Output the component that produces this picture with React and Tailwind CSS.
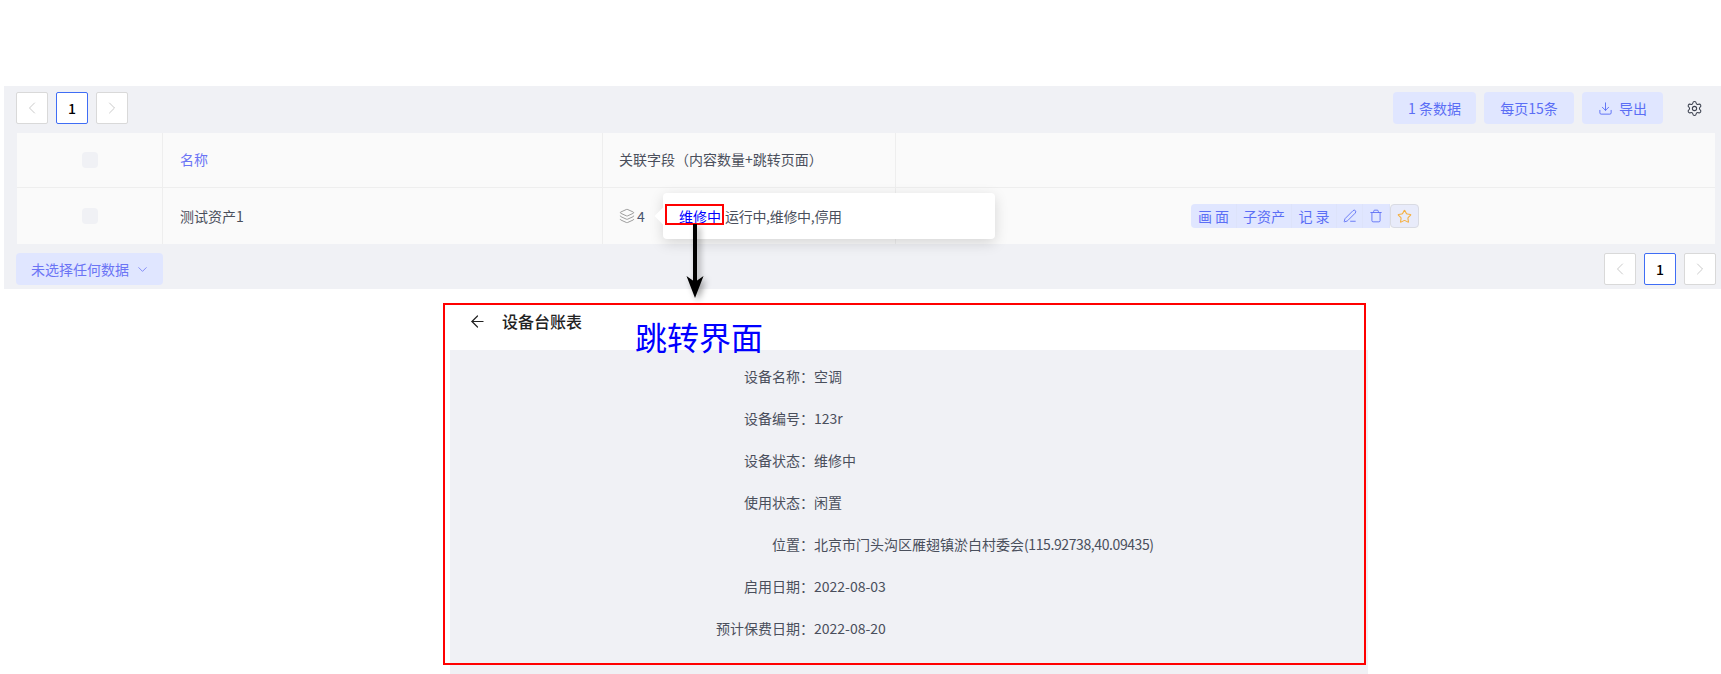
import { ArrowLeft, ChevronDown, ChevronLeft, ChevronRight, Download, Layers, PenLine, Settings, Star, Trash } from 'lucide-react';

const FIELDS = [
  ['设备名称：', '空调'],
  ['设备编号：', '123r'],
  ['设备状态：', '维修中'],
  ['使用状态：', '闲置'],
  ['位置：', <>北京市门头沟区雁翅镇淤白村委会<span className="tracking-[-0.4px]">(115.92738,40.09435)</span></>],
  ['启用日期：', '2022-08-03'],
  ['预计保费日期：', '2022-08-20'],
];

function Pager() {
  return (
    <div className="flex gap-2">
      <button className="w-8 h-8 flex items-center justify-center bg-white border border-[#d9d9d9] rounded-[2px] text-[#bfbfbf]">
        <ChevronLeft size={20} strokeWidth={1} />
      </button>
      <button className="w-8 h-8 flex items-center justify-center bg-white border border-[#3f6df5] rounded-[2px] text-[14px] font-medium text-black">
        1
      </button>
      <button className="w-8 h-8 flex items-center justify-center bg-white border border-[#d9d9d9] rounded-[2px] text-[#bfbfbf]">
        <ChevronRight size={20} strokeWidth={1} />
      </button>
    </div>
  );
}

function Checkbox() {
  return <div className="w-4 h-4 rounded-sm bg-[#f0f1f5]" />;
}

function ActionBtn({ children, className = '' }) {
  return <div className={`h-6 flex items-center justify-center bg-[#e0e6ff] border-r border-[#dde3fa] text-[#5b6ef5] text-[14px] ${className}`}>{children}</div>;
}

export default function App() {
  return (
    <div className="relative w-[1721px] h-[674px] overflow-hidden bg-white font-['Noto_Sans_CJK_SC','Liberation_Sans',sans-serif] text-[14px] text-[#4a4f5c]">
      <div className="h-[86px]" />

      <div className="ml-1 h-[203px] bg-[#f0f1f5] flex flex-col">
        <div className="h-[47px] pt-1.5 pl-3 pr-[13px] flex justify-between items-start">
          <Pager />
          <div className="flex items-center gap-2 text-[#5b6ef5]">
            <div className="w-[83px] h-8 flex items-center justify-center bg-[#e0e6ff] rounded-sm">1 条数据</div>
            <div className="w-[90px] h-8 flex items-center justify-center bg-[#e0e6ff] rounded-sm">每页15条</div>
            <div className="w-[81px] h-8 flex items-center justify-center gap-[6px] bg-[#e0e6ff] rounded-sm">
              <Download size={15} strokeWidth={1.5} />
              导出
            </div>
            <div className="w-[37px] flex justify-end pr-[5px] text-[#3d4250]">
              <Settings size={17} strokeWidth={1.5} />
            </div>
          </div>
        </div>

        <div className="ml-[13px] mr-[6px] bg-[#fafafa]">
          <div className="h-[55px] flex border-b border-[#eeeeee]">
            <div className="w-[146px] flex items-center justify-center border-r border-[#eeeeee]"><Checkbox /></div>
            <div className="w-[440px] flex items-center pl-[17px] pb-[2px] border-r border-[#eeeeee] text-[#6b74f5]">名称</div>
            <div className="w-[293px] flex items-center pl-4 pb-[2px] border-r border-[#eeeeee] text-[#4a4f5c]">关联字段（内容数量+跳转页面）</div>
          </div>
          <div className="h-[56px] flex">
            <div className="w-[146px] flex items-center justify-center border-r border-[#eeeeee]"><Checkbox /></div>
            <div className="w-[440px] flex items-center pl-[17px] border-r border-[#eeeeee]">测试资产1</div>
            <div className="w-[293px] flex items-center pl-4 border-r border-[#eeeeee]">
              <Layers size={16} strokeWidth={1.25} className="text-[#8a8a8a] mr-[2px]" />
              <span className="text-[#4a5570]">4</span>
            </div>
            <div className="flex-1 flex items-center pl-[295px]">
              <ActionBtn className="w-[46px] rounded-l-sm">画 面</ActionBtn>
              <ActionBtn className="w-[55px]">子资产</ActionBtn>
              <ActionBtn className="w-[45px]">记 录</ActionBtn>
              <ActionBtn className="w-[26px]"><PenLine size={14} strokeWidth={1.5} /></ActionBtn>
              <ActionBtn className="w-[27px]"><Trash size={14} strokeWidth={1.5} /></ActionBtn>
              <div className="w-[29px] h-6 flex items-center justify-center bg-[#e8ebfa] border border-[#d9dbe3] rounded-sm text-[#f5b041]">
                <Star size={15} strokeWidth={1.75} />
              </div>
            </div>
          </div>
        </div>

        <div className="flex-1 pl-3 pr-[5px] pt-[9px] flex justify-between items-start">
          <div className="w-[147px] h-8 flex items-center pl-[15px] gap-[6px] bg-[#e0e6ff] rounded-sm text-[#6b74f5]">
            未选择任何数据
            <ChevronDown size={15} strokeWidth={1.25} />
          </div>
          <Pager />
        </div>
      </div>

      <div className="mt-[61px] ml-[450px] w-[918px] h-[324px] bg-[#f0f1f5] pt-[15px] flex flex-col gap-[20px]">
        {FIELDS.map(([label, value]) => (
          <div key={label} className="flex h-[22px] items-center leading-[22px]">
            <div className="w-[364px] text-right">{label}</div>
            <div>{value}</div>
          </div>
        ))}
      </div>

      <div className="absolute left-[443px] top-[303px] w-[923px] h-[362px] border-2 border-[#ff0000]" />
      <div className="absolute left-[468px] top-[309px] flex items-center text-[#222222]">
        <ArrowLeft size={19} strokeWidth={1.5} />
        <span className="ml-[15px] text-[16px] font-medium">设备台账表</span>
      </div>
      <div className="absolute left-[635px] top-[314px] text-[32px] leading-[44px] text-[#0000ff]">跳转界面</div>

      <div className="absolute left-[663px] top-[193px] w-[332px] h-[46px] bg-white rounded-sm shadow-[0_4px_14px_rgba(0,0,0,0.15)] flex items-center pl-[16px]">
        <span className="absolute -left-[6px] top-[17px] w-3 h-3 bg-white rotate-45" />
        <span className="relative text-[#0000ff]">维修中</span>
        <span className="relative ml-[4px] tracking-[-0.3px]">运行中,维修中,停用</span>
      </div>

      <div className="absolute left-[665px] top-[204px] w-[59px] h-[21px] border-2 border-[#ff0000]" />
      <svg className="absolute left-[680px] top-[224px] drop-shadow-[3px_3px_3px_rgba(0,0,0,0.35)]" width="30" height="76" viewBox="0 0 30 76">
        <path d="M15 0V60" stroke="#000" strokeWidth="4" />
        <path d="M6.5 52L15 58L23.5 52L15 74Z" fill="#000" />
      </svg>
    </div>
  );
}
